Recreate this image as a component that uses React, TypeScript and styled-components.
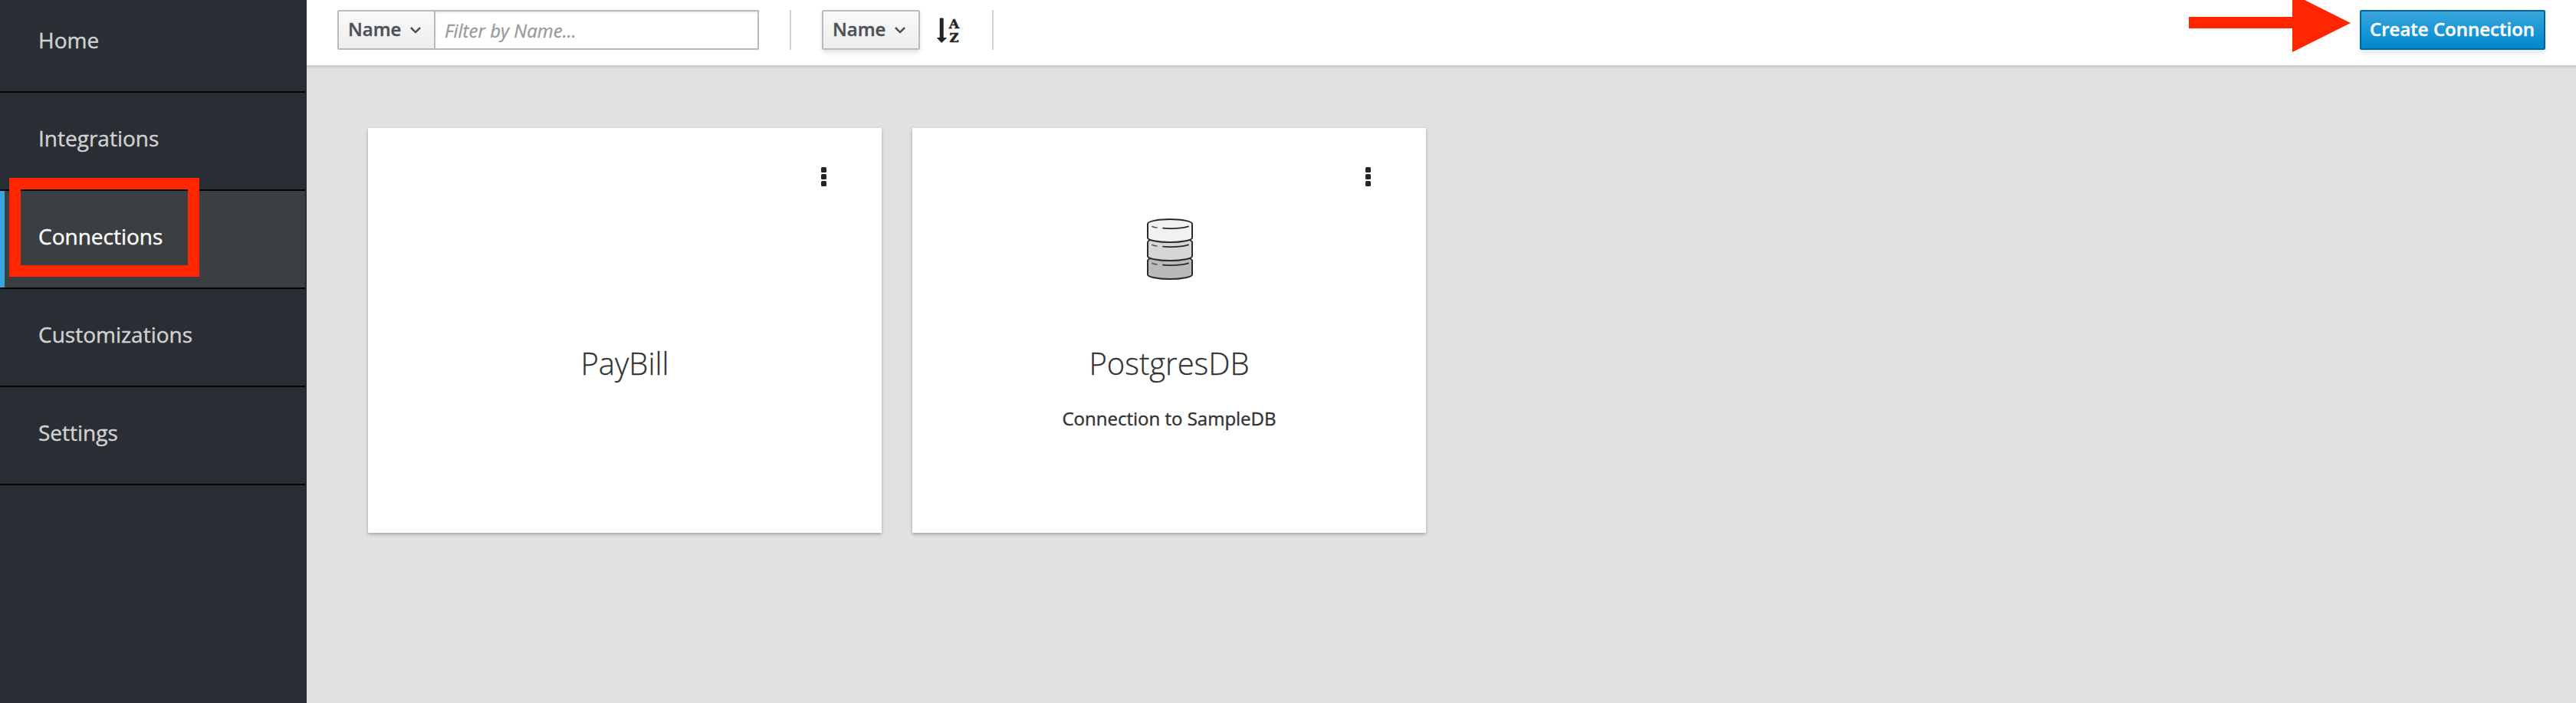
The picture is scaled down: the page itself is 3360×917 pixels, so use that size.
import React from "react";
import styled, { createGlobalStyle } from "styled-components";

const GlobalStyle = createGlobalStyle`
  *, *::before, *::after { box-sizing: border-box; }
  body { margin: 0; background: #e1e1e1; font-family: "Open Sans", "Liberation Sans", sans-serif; color: #333; overflow: hidden; }
  button, input { font-family: inherit; }
`;

const Page = styled.div`
  position: relative;
  display: flex;
  width: 3360px;
  height: 917px;
  overflow: hidden;
  background: #e1e1e1;
`;

const Sidebar = styled.nav`
  width: 400px;
  flex: none;
  background: #292e34;
  border-right: 2px solid #292e34;
  overflow: hidden;
`;

const NavList = styled.ul`
  list-style: none;
  margin: -7px 0 0;
  padding: 0;
`;

const NavItem = styled.li<{ $active?: boolean }>`
  height: 128px;
  padding: 41px 0 0 50px;
  box-shadow: ${(p) => (p.$active ? "inset 6px 0 0 #39a5dc" : "none")};
  border-bottom: 2px solid #030303;
  background: ${(p) => (p.$active ? "#3b3f42" : "transparent")};
  color: ${(p) => (p.$active ? "#fff" : "#d1d1d1")};
  font-size: 28px;
  line-height: 36px;
  -webkit-text-stroke: 0.4px currentColor;
`;

const Main = styled.main`
  flex: 1;
  display: flex;
  flex-direction: column;
`;

const Toolbar = styled.header`
  display: flex;
  align-items: flex-start;
  height: 89px;
  padding: 13px 40px 0;
  background: #fff;
  border-bottom: 2px solid #d6d6d6;
  box-shadow: inset 0 -2px 0 #d0d0d0;
`;

const Button = styled.button<{ $primary?: boolean; $attached?: boolean }>`
  display: flex;
  align-items: center;
  height: 52px;
  width: ${(p) => (p.$primary ? 242 : 128)}px;
  padding: 0 0 3px ${(p) => (p.$primary ? 11 : 12)}px;
  border: 2px solid ${(p) => (p.$primary ? "#00659c" : "#bbb")};
  border-radius: ${(p) => (p.$attached ? "2px 0 0 2px" : "2px")};
  background: ${(p) =>
    p.$primary ? "linear-gradient(#39a5dc, #0088ce)" : "linear-gradient(#fafafa, #ededed)"};
  box-shadow: ${(p) => (p.$attached ? "none" : "0 4px 6px rgba(3, 3, 3, 0.1)")};
  color: ${(p) => (p.$primary ? "#fff" : "#4d5258")};
  font-size: 24px;
  font-weight: 600;
  line-height: 44px;
  white-space: nowrap;
  -webkit-text-stroke: 0.4px currentColor;

  svg { margin: 3px 0 0 12px; }
`;

const FilterField = styled.label`
  display: flex;
  align-items: center;
  width: 424px;
  height: 52px;
  margin-left: -2px;
  padding: 1px 12px 0 12px;
  border: 2px solid #bbb;
  background: #fff;
  box-shadow: inset 0 2px 2px rgba(3, 3, 3, 0.075);
`;

const FilterInput = styled.input`
  flex: 1;
  min-width: 0;
  height: 40px;
  padding: 0;
  border: 0;
  outline: 0;
  background: transparent;
  font-size: 24px;

  &::placeholder {
    color: #999;
    font-style: italic;
    opacity: 1;
    -webkit-text-stroke: 0.3px #999;
  }
`;

const Divider = styled.span`
  width: 2px;
  height: 52px;
  margin: 0 40px;
  background: #d1d1d1;
`;

const SortIcon = styled.svg`
  width: 32px;
  height: 36px;
  margin: 9px 2px 0 20px;
`;

const SortLetter = styled.text`
  font-family: "DejaVu Serif", serif;
  font-size: 17.5px;
  font-weight: 700;
  stroke: #252525;
  stroke-width: 0.6px;
`;

const Spacer = styled.div`
  flex: 1;
`;

const Cards = styled.section`
  display: flex;
  gap: 40px;
  padding: 78px 80px;
`;

const Card = styled.article`
  width: 670px;
  height: 528px;
  padding-top: 51px;
  display: flex;
  flex-direction: column;
  align-items: center;
  background: #fff;
  box-shadow: 0 2px 4px rgba(3, 3, 3, 0.28);
`;

const Kebab = styled.svg`
  align-self: flex-end;
  width: 7px;
  height: 25px;
  margin-right: 72px;
`;

const IconSlot = styled.div`
  height: 80px;
  margin: 42px 0 0 2px;
`;

const Title = styled.h2`
  margin: 87px 0 0;
  font-size: 40px;
  font-weight: 300;
  line-height: 44px;
  -webkit-text-stroke: 0.3px currentColor;
`;

const Description = styled.p`
  margin: 30px 0 0;
  font-size: 24px;
  line-height: 40px;
  -webkit-text-stroke: 0.4px currentColor;
`;

const HighlightBox = styled.div`
  position: absolute;
  left: 12px;
  top: 232px;
  width: 248px;
  height: 129px;
  border: 15px solid #ff2600;
`;

const Arrow = styled.svg`
  position: absolute;
  left: 2854px;
  top: 0;
`;

const Chevron = () => (
  <svg width="14" height="9" viewBox="0 0 14 9" fill="none" stroke="#4d5258" strokeWidth="2.5">
    <path d="M0.9 1 L7 7.1 L13.1 1" />
  </svg>
);

const bands = [
  { y: 48, fill: "#bababa" },
  { y: 24, fill: "#d6d6d6" },
  { y: 0, fill: "#f1f1f1" },
];

const DatabaseIcon = () => (
  <svg width="60" height="80" viewBox="0 0 60 80" fill="none" stroke="#2b2b2b" strokeWidth="2" strokeLinecap="round">
    {bands.map(({ y, fill }) => (
      <g key={y} transform={`translate(0 ${y})`}>
        <path
          d="M1 7 C1 4 13 1 30 1 C47 1 59 4 59 7 V25.500 C59 28 46 31 30 31 C14 31 1 28 1 25.500 Z"
          fill={fill}
        />
        <path d="M7 10.500 Q10 11.800 13 12" stroke="#555" strokeWidth="1.700" />
        <path d="M21 12.700 Q42 14 54 10.300" strokeWidth="1.800" />
      </g>
    ))}
  </svg>
);

const navItems = ["Home", "Integrations", "Connections", "Customizations", "Settings"];
const connections = [
  { name: "PayBill" },
  { name: "PostgresDB", description: "Connection to SampleDB", icon: <DatabaseIcon /> },
];

export default function App() {
  return (
    <Page>
      <GlobalStyle />
      <Sidebar>
        <NavList>
          {navItems.map((item) => (
            <NavItem key={item} $active={item === "Connections"}>{item}</NavItem>
          ))}
        </NavList>
      </Sidebar>
      <Main>
        <Toolbar>
          <Button $attached>Name<Chevron /></Button>
          <FilterField>
            <FilterInput placeholder="Filter by Name..." />
          </FilterField>
          <Divider />
          <Button>Name<Chevron /></Button>
          <SortIcon viewBox="0 0 32 36" fill="#252525">
            <path d="M6.300 1.500 h3.800 q.6 0 .6.600 V27 h3.500 q.9 0 .4.800 L8.700 33.500 q-.5.500-1 0 L2.300 27.800 q-.5-.8.400-.8 H5.700 V2.100 q0-.6.600-.6z" />
            <SortLetter x="17.8" y="15" textLength="13.5" lengthAdjust="spacingAndGlyphs">A</SortLetter>
            <SortLetter x="18.5" y="33" textLength="12" lengthAdjust="spacingAndGlyphs">Z</SortLetter>
          </SortIcon>
          <Divider />
          <Spacer />
          <Button $primary>Create Connection</Button>
        </Toolbar>
        <Cards>
          {connections.map(({ name, description, icon }) => (
            <Card key={name}>
              <Kebab viewBox="0 0 7 25" fill="#252525">
                <rect width="7" height="7" rx="1.500" />
                <rect y="9" width="7" height="7" rx="1.500" />
                <rect y="18" width="7" height="7" rx="1.500" />
              </Kebab>
              <IconSlot>{icon}</IconSlot>
              <Title>{name}</Title>
              {description && <Description>{description}</Description>}
            </Card>
          ))}
        </Cards>
      </Main>
      <HighlightBox />
      <Arrow width="213" height="70" viewBox="0 0 213 70" fill="#ff2600">
        <path d="M1 22 H136 V-8 L212 30 L136 68 V37 H1 Z" />
      </Arrow>
    </Page>
  );
}
